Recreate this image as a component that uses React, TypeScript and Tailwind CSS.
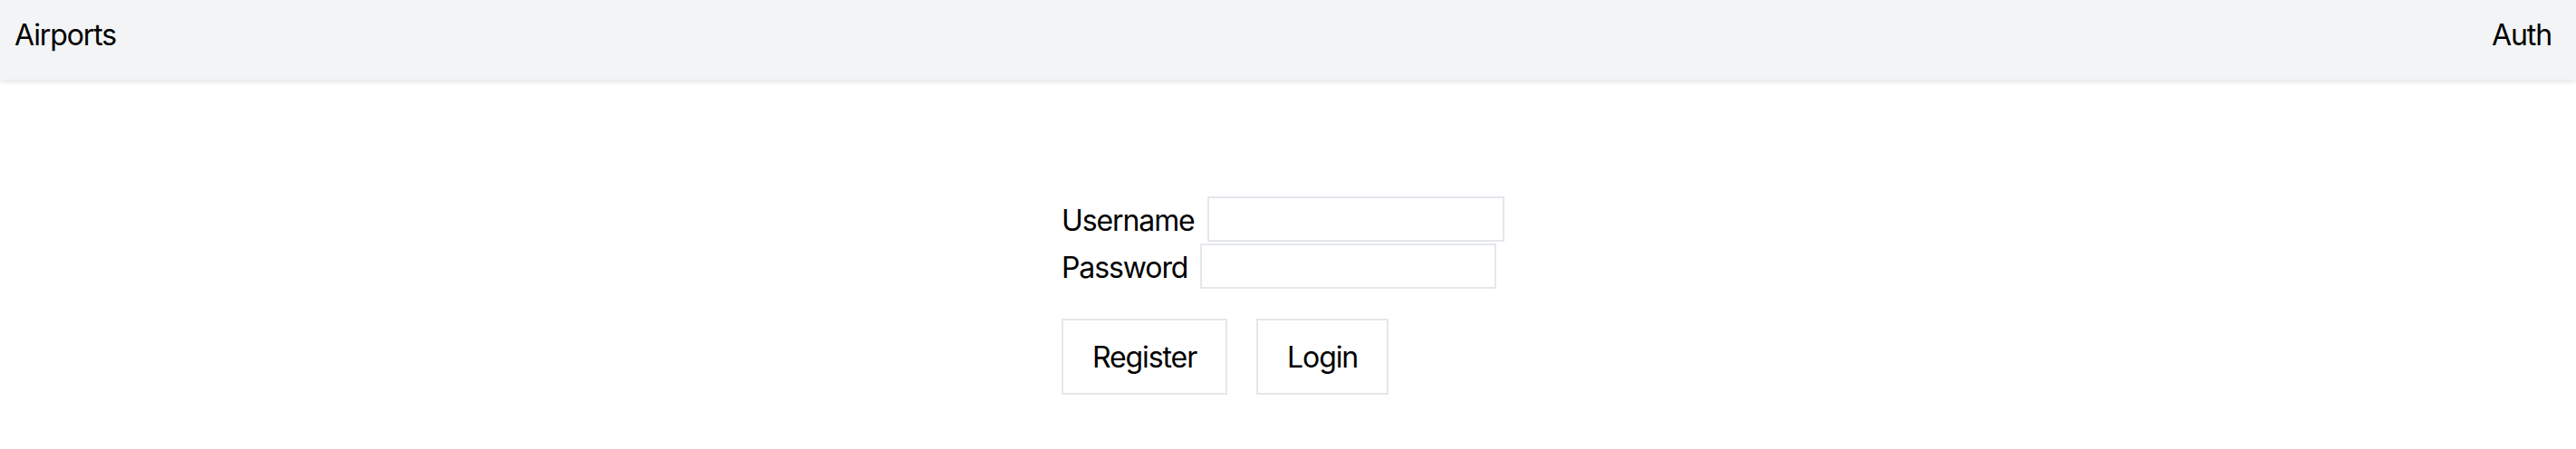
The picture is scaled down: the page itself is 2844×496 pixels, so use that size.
import React from "react";

export default function App() {
  return (
    <div className="min-h-screen bg-white text-black font-['Inter',_'Liberation_Sans',_sans-serif] text-[32px] leading-[48px] tracking-[-1.1px]">
      <header className="relative z-10 flex h-[88px] items-start justify-between bg-[#f3f4f6] pl-4 pr-[27px] pt-[15px] shadow-[0_2px_6px_rgba(0,0,0,0.12)]">
        <span>Airports</span>
        <span>Auth</span>
      </header>
      <main className="pt-[129px]">
        <form className="mx-auto flex w-[500px] flex-col" onSubmit={(e) => e.preventDefault()}>
          <div className="flex h-[50px] items-center">
            <label htmlFor="username" className="pt-[3px]">Username</label>
            <input
              id="username"
              type="text"
              className="ml-[14px] h-[50px] w-[328px] border-2 border-[#e5e7eb] bg-white px-2 outline-none"
            />
          </div>
          <div className="mt-[2px] flex h-[50px] items-center">
            <label htmlFor="password" className="pt-[3px]">Password</label>
            <input
              id="password"
              type="password"
              className="ml-[14px] h-[50px] w-[327px] border-2 border-[#e5e7eb] bg-white px-2 outline-none"
            />
          </div>
          <div className="mt-[33px] flex gap-8">
            <button type="button" className="border-2 border-[#e5e7eb] bg-white px-8 pt-[17px] pb-[15px] leading-[48px]">
              Register
            </button>
            <button type="submit" className="border-2 border-[#e5e7eb] bg-white px-8 pt-[17px] pb-[15px] leading-[48px]">
              Login
            </button>
          </div>
        </form>
      </main>
    </div>
  );
}
